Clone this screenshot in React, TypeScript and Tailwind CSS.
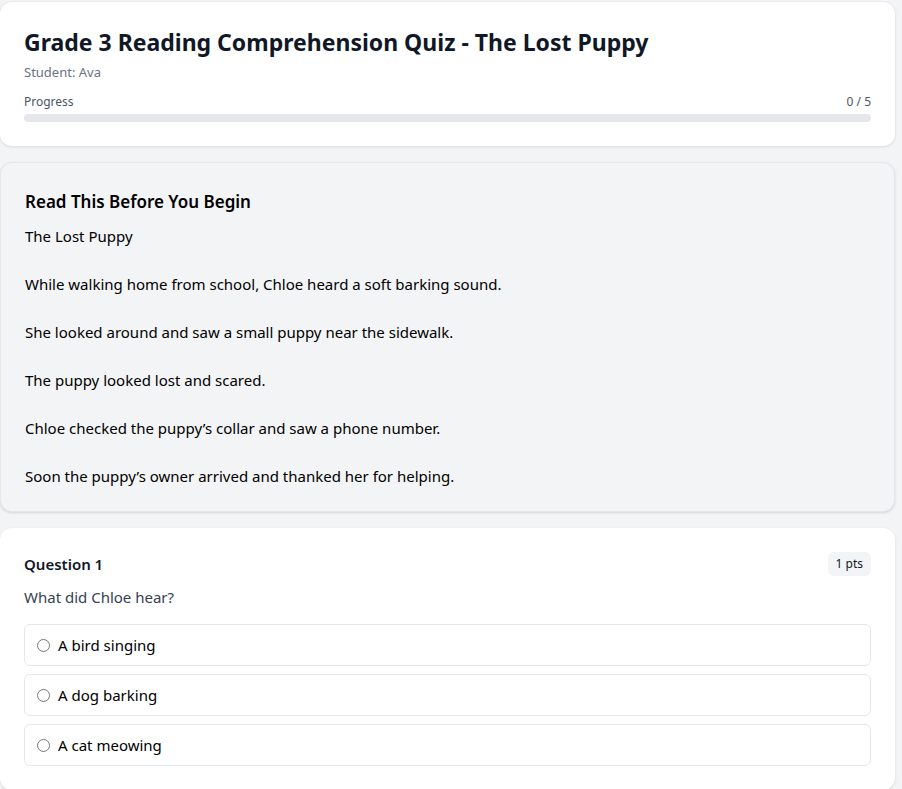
import { useState } from "react";

const passage = [
  "The Lost Puppy",
  "While walking home from school, Chloe heard a soft barking sound.",
  "She looked around and saw a small puppy near the sidewalk.",
  "The puppy looked lost and scared.",
  "Chloe checked the puppy’s collar and saw a phone number.",
  "Soon the puppy’s owner arrived and thanked her for helping.",
];

const options = ["A bird singing", "A dog barking", "A cat meowing"];

export default function App() {
  const [answer, setAnswer] = useState<string | null>(null);
  const answered = answer ? 1 : 0;

  return (
    <div className="min-h-screen bg-gray-100 pt-0.5 pr-[7px] font-['Noto_Sans',sans-serif] text-gray-900">
      <div className="space-y-4">
        <section className="rounded-xl bg-white p-6 shadow-sm ring-1 ring-gray-200/60">
          <h1 className="text-[23px] leading-8 font-bold text-gray-900">Grade 3 Reading Comprehension Quiz - The Lost Puppy</h1>
          <p className="mt-1 text-[13px] leading-5 text-gray-500">Student: Ava</p>
          <div className="mt-3">
            <div className="mb-1 flex items-center justify-between text-xs text-gray-600">
              <span>Progress</span>
              <span>{answered} / 5</span>
            </div>
            <div className="h-2 w-full rounded-full bg-gray-200">
              <div className="h-2 rounded-full bg-blue-500" style={{ width: `${(answered / 5) * 100}%` }} />
            </div>
          </div>
        </section>

        <section className="rounded-xl border border-gray-200 bg-gray-100 px-6 pt-[25px] pb-[23px] shadow-sm">
          <h2 className="text-[17px] leading-7 font-semibold text-black">Read This Before You Begin</h2>
          <div className="mt-2 text-[15px] leading-6 text-black">
            {passage.map((line, index) => (
              <p key={index} className={index > 0 ? "mt-6" : ""}>
                {line}
              </p>
            ))}
          </div>
        </section>

        <section className="rounded-xl bg-white p-6 shadow-sm">
          <div className="flex items-center justify-between">
            <h3 className="text-[15px] font-semibold text-gray-900">Question 1</h3>
            <span className="rounded-md bg-gray-100 px-2 py-1 text-xs leading-4 text-gray-900">1 pts</span>
          </div>
          <p className="mt-[9px] text-[15px] leading-6 text-gray-700">What did Chloe hear?</p>
          <div className="mt-[15px] space-y-2">
            {options.map((option) => (
              <label
                key={option}
                className="flex cursor-pointer items-center gap-2 rounded-md border border-gray-200 px-3 py-2 text-[15px] leading-6 text-black"
              >
                <input
                  type="radio"
                  name="q1"
                  className="m-0 h-[13px] w-[13px]"
                  checked={answer === option}
                  onChange={() => setAnswer(option)}
                />
                <span>{option}</span>
              </label>
            ))}
          </div>
        </section>
      </div>
    </div>
  );
}
